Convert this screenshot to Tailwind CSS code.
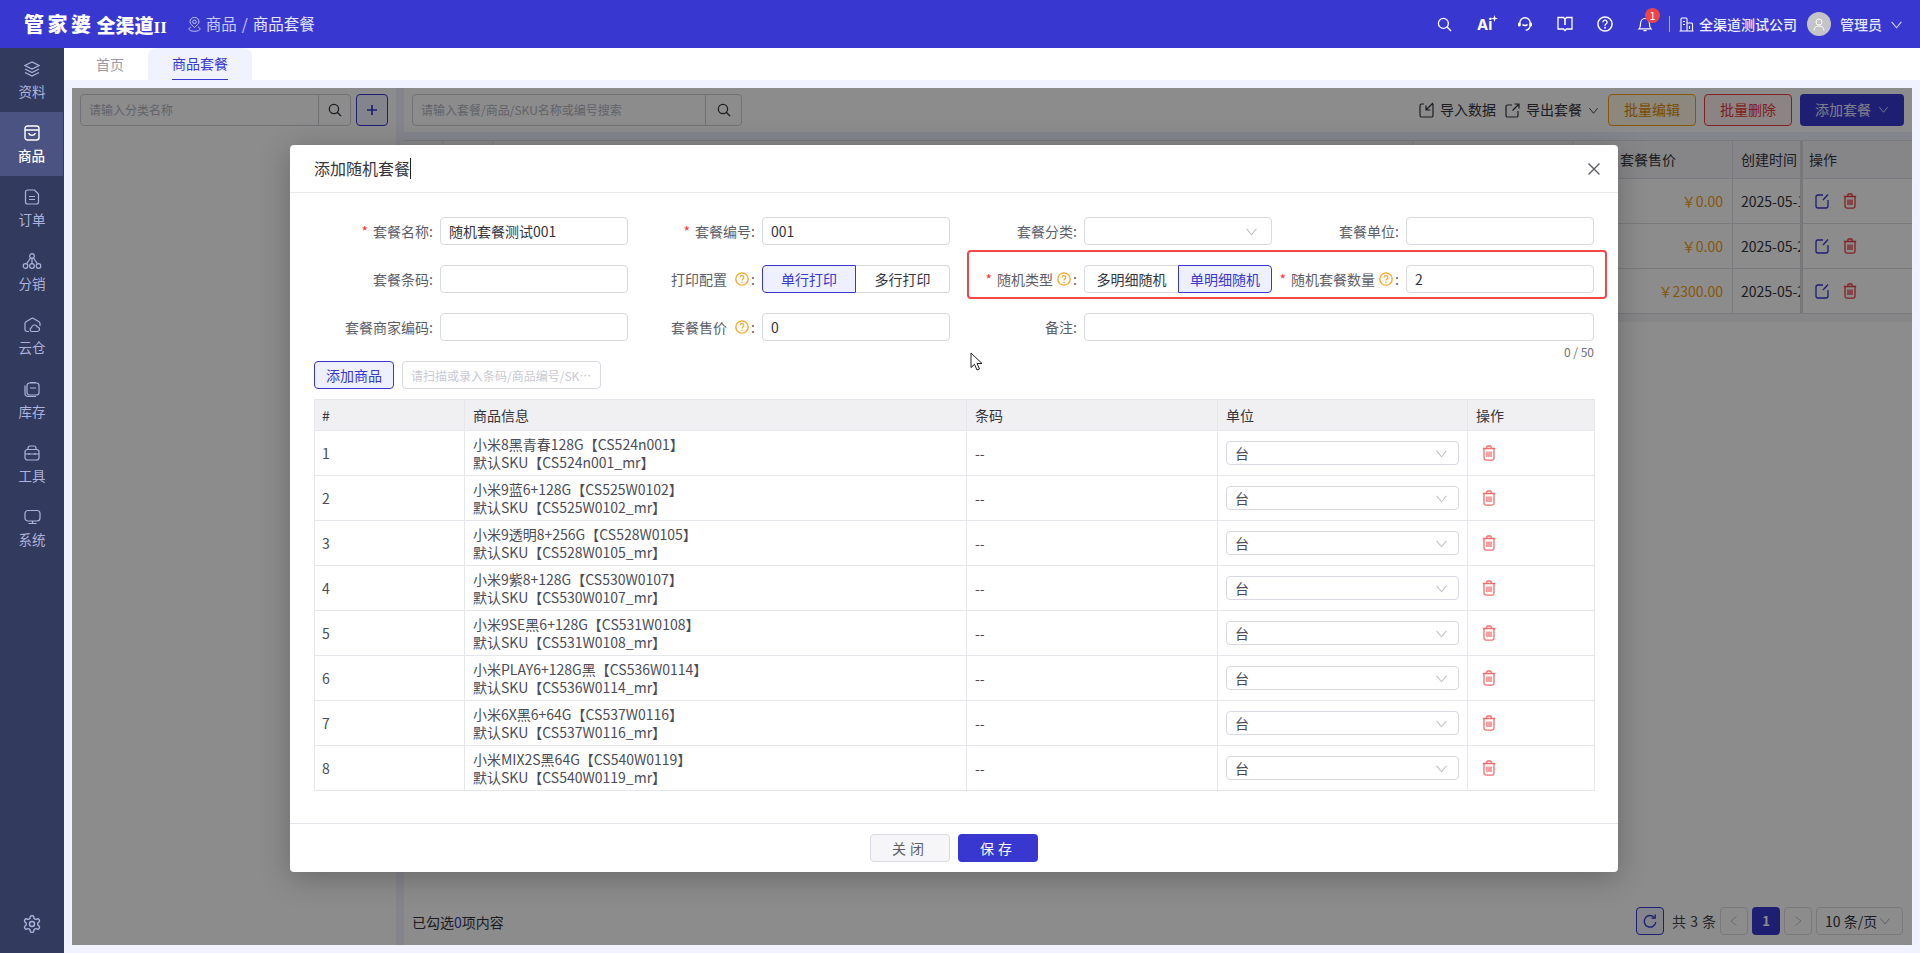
<!DOCTYPE html>
<html lang="zh-CN">
<head>
  <meta charset="UTF-8">
  <meta name="viewport" content="width=device-width, initial-scale=1.0">
  <title>商品套餐</title>
  <script src="https://cdn.jsdelivr.net/npm/@tailwindcss/browser@4"></script>
</head>
<body class="h-screen overflow-hidden bg-[#f0f2ff] text-[14px] text-[#33343d] font-['Noto_Sans_CJK_SC','Noto_Sans',sans-serif]">

  <svg class="hidden">
    <symbol id="chevron" viewBox="0 0 12 12"><path d="M1.500 3.500 6 9l4.500-5.500" fill="none" stroke="currentColor" stroke-width="1"/></symbol>
    <symbol id="trash" viewBox="0 0 14 16"><path d="M.8 3.500h12.400M4.800 3.500V2a1 1 0 0 1 1-1h2.400a1 1 0 0 1 1 1v1.500M2 3.500v9.800a1.800 1.800 0 0 0 1.800 1.800h6.400a1.800 1.800 0 0 0 1.800-1.800V3.500M5 6.500v5.500M7 6.500v5.500M9 6.500v5.500" fill="none" stroke="currentColor" stroke-width="1.300"/></symbol>
    <symbol id="edit" viewBox="0 0 14 16"><path d="M8 2H3a2 2 0 0 0-2 2v9a2 2 0 0 0 2 2h8a2 2 0 0 0 2-2V7M13 1.500 8 7" fill="none" stroke="currentColor" stroke-width="1.300"/></symbol>
    <symbol id="help" viewBox="0 0 14 14"><circle cx="7" cy="7" r="6.200" fill="none" stroke="currentColor" stroke-width="1.300"/><path d="M5.200 5.500a1.800 1.800 0 1 1 2.700 1.500c-.6.400-.9.700-.9 1.500" fill="none" stroke="currentColor" stroke-width="1.200"/><circle cx="7" cy="10.300" r=".8" fill="currentColor"/></symbol>
    <symbol id="search" viewBox="0 0 16 16"><circle cx="6.800" cy="6.800" r="5.300" fill="none" stroke="currentColor" stroke-width="1.400"/><path d="m10.500 10.500 4.500 4.500" fill="none" stroke="currentColor" stroke-width="1.600"/></symbol>
  </svg>

  <!-- top bar -->
  <header class="h-12 bg-[#3838d1] text-white flex items-center">
    <div class="w-[24px]"></div>
    <span class="text-[20px] leading-none font-black tracking-[3.500px]">管家婆</span>
    <span class="ml-[2px] mt-[3px] text-[19px] leading-none font-black">全渠道<span class="font-['Liberation_Serif',serif] font-bold text-[17px]">II</span></span>
    <svg class="ml-[21px] text-[#c3c6f5]" width="13" height="15" viewBox="0 0 13 15" fill="none" stroke="currentColor" stroke-width="1"><path d="M6.500 10.500C4.500 8.500 2 6.800 2 4.800a4.500 4.500 0 0 1 9 0c0 2-2.500 3.700-4.500 5.700z"/><circle cx="6.500" cy="4.800" r="1.800"/><path d="M3 10c-1.300.5-2 1.200-2 2 0 1.300 2.500 2.300 5.500 2.300S12 13.300 12 12c0-.8-.7-1.500-2-2"/></svg>
    <span class="ml-[5px] text-[15.500px] text-[#c9cbf7]">商品</span>
    <span class="mx-[5px] text-[15.500px] text-[#c9cbf7]">/</span>
    <span class="text-[15.500px] text-[#e6e7fc]">商品套餐</span>

    <div class="ml-auto flex items-center">
      <svg width="15" height="15" class="mr-[25px]"><use href="#search"/></svg>
      <span class="relative mr-[24px] w-[16px] text-[15px] font-bold leading-none font-['Inter',sans-serif]">Ai<svg class="absolute -top-[2px] -right-[5px]" width="7" height="7" viewBox="0 0 6 6" fill="white"><path d="M3 0l.7 2.300L6 3l-2.300.7L3 6l-.7-2.300L0 3l2.300-.7z"/></svg></span>
      <svg class="mr-[24px]" width="16" height="16" viewBox="0 0 16 16" fill="none" stroke="currentColor" stroke-width="1.400"><path d="M2.800 9V7a5.200 5.200 0 0 1 10.400 0v2c0 2.600-1.700 4.800-4.500 5.400"/><rect x="1" y="6.500" width="2.600" height="4" rx="1.200" fill="currentColor" stroke="none"/><rect x="12.400" y="6.500" width="2.600" height="4" rx="1.200" fill="currentColor" stroke="none"/><path d="M5.500 8.500c1.200 1.400 3.800 1.400 5 0"/></svg>
      <svg class="mr-[24px]" width="16" height="16" viewBox="0 0 16 16" fill="none" stroke="currentColor" stroke-width="1.300"><path d="M1 1.500h5.500L8 3l1.500-1.500H15V13H9.500L8 14.500 6.500 13H1z"/><path d="M8 3v6" stroke-width="1.600"/></svg>
      <svg class="mr-[24px]" width="16" height="16" viewBox="0 0 16 16"><use href="#help"/></svg>
      <span class="relative mr-[16px] w-[16px] h-[16px] block">
        <svg width="16" height="16" viewBox="0 0 16 16" fill="none" stroke="currentColor" stroke-width="1.200"><path d="M2 12.800h12c-1.100-1.100-1.500-2-1.500-4.800 0-3-1.900-5.500-4.500-5.500S3.500 5 3.500 8c0 2.800-.4 3.700-1.500 4.800zM6.500 14.700h3"/></svg>
        <span class="absolute -top-[8px] left-[8px] w-[15px] h-[15px] rounded-full bg-[#ef4444] text-white text-[11px] leading-[15px] text-center">1</span>
      </span>
      <span class="w-px h-[16px] bg-[#a9abec] mr-[9px]"></span>
      <svg class="mr-[5px]" width="15" height="15" viewBox="0 0 15 15" fill="none" stroke="currentColor" stroke-width="1.100"><path d="M2 14V2a1 1 0 0 1 1-1h4a1 1 0 0 1 1 1v12M8 6h4.500a1 1 0 0 1 1 1v7M.5 14h14M4 4.500h2M4 7.500h2M10.500 9v3"/></svg>
      <span class="text-[14px] text-[#eeeefd] font-medium">全渠道测试公司</span>
      <span class="ml-[10px] w-6 h-6 rounded-full bg-[#c4c4c6] flex items-center justify-center">
        <svg width="12" height="13" viewBox="0 0 12 13" fill="none" stroke="white" stroke-width="1"><circle cx="6" cy="4" r="3"/><path d="M1 12.500c0-3 2-4.500 5-4.500s5 1.500 5 4.500"/></svg>
      </span>
      <span class="ml-[9px] text-[14px] text-[#e6e7fc] font-medium">管理员</span>
      <svg class="ml-[8px] mr-[17px] text-[#d5d6f8]" width="13" height="13"><use href="#chevron"/></svg>
    </div>
  </header>

  <div class="flex h-[905px]">
    <!-- side nav -->
    <nav class="w-16 shrink-0 bg-[#323a5e] text-[#adb3dc] flex flex-col">
      <a class="h-16 flex flex-col items-center pt-[13px]">
        <svg width="16" height="16" viewBox="0 0 16 16" fill="none" stroke="currentColor" stroke-width="1.200"><path d="M8 1 1 4.500 8 8l7-3.500zM1 8l7 3.500L15 8M1 11.500 8 15l7-3.500"/></svg>
        <span class="mt-[4px] leading-[20px] text-[13.500px]">资料</span>
      </a>
      <a class="h-16 w-[63px] bg-[#4a5382] text-white flex flex-col items-center pt-[13px]">
        <svg width="16" height="16" viewBox="0 0 16 16" fill="none" stroke="currentColor" stroke-width="1.400"><rect x="1" y="1" width="14" height="14" rx="2.500"/><path d="M1 5h14M4.800 8c.5 3 5.900 3 6.400 0"/></svg>
        <span class="mt-[4px] leading-[20px] text-[13.500px] font-medium">商品</span>
      </a>
      <a class="h-16 flex flex-col items-center pt-[13px]">
        <svg width="16" height="16" viewBox="0 0 16 16" fill="none" stroke="currentColor" stroke-width="1.200"><path d="M10.500 1H3.500a2 2 0 0 0-2 2v10a2 2 0 0 0 2 2h9a2 2 0 0 0 2-2V5zM5 7.500h6M5 10.500h6"/></svg>
        <span class="mt-[4px] leading-[20px] text-[13.500px]">订单</span>
      </a>
      <a class="h-16 flex flex-col items-center pt-[13px]">
        <svg width="20" height="16" viewBox="0 0 20 16" fill="none" stroke="currentColor" stroke-width="1.200"><circle cx="10" cy="3" r="2.300"/><circle cx="3.500" cy="13" r="2.300"/><circle cx="10" cy="13" r="2.300"/><circle cx="16.500" cy="13" r="2.300"/><path d="M10 5.300v5.400M8.500 5 4.500 10.800M11.500 5l4 5.800"/></svg>
        <span class="mt-[4px] leading-[20px] text-[13.500px]">分销</span>
      </a>
      <a class="h-16 flex flex-col items-center pt-[13px]">
        <svg width="17" height="16" viewBox="0 0 17 16" fill="none" stroke="currentColor" stroke-width="1.200"><path d="M5 14.500H3a2 2 0 0 1-2-2V6.500a2 2 0 0 1 1-1.700L7.500 1.500a2 2 0 0 1 2 0L15 4.800a2 2 0 0 1 1 1.700V9"/><path d="M8 14.500a2 2 0 0 1-.5-3.900 3 3 0 0 1 5.800-.6 2.300 2.300 0 0 1 2.200 2.200 2.300 2.300 0 0 1-2 2.300z"/></svg>
        <span class="mt-[4px] leading-[20px] text-[13.500px]">云仓</span>
      </a>
      <a class="h-16 flex flex-col items-center pt-[13px]">
        <svg width="16" height="16" viewBox="0 0 16 16" fill="none" stroke="currentColor" stroke-width="1.200"><rect x="3" y="2" width="12" height="12" rx="2.500"/><path d="M1 4.500v8a3 3 0 0 0 3 3h8M6 1.500h6M6 7h6"/></svg>
        <span class="mt-[4px] leading-[20px] text-[13.500px]">库存</span>
      </a>
      <a class="h-16 flex flex-col items-center pt-[13px]">
        <svg width="16" height="16" viewBox="0 0 16 16" fill="none" stroke="currentColor" stroke-width="1.200"><rect x="1" y="4.500" width="14" height="10.500" rx="2.500"/><path d="M4 4.500V3a2 2 0 0 1 2-2h4a2 2 0 0 1 2 2v1.500M1 9h14M5 8v2M11 8v2"/></svg>
        <span class="mt-[4px] leading-[20px] text-[13.500px]">工具</span>
      </a>
      <a class="h-16 flex flex-col items-center pt-[13px]">
        <svg width="17" height="16" viewBox="0 0 17 16" fill="none" stroke="currentColor" stroke-width="1.200"><rect x="1" y="1.500" width="15" height="10.500" rx="3"/><path d="M8.500 12v2.500M4.500 14.500h8"/></svg>
        <span class="mt-[4px] leading-[20px] text-[13.500px]">系统</span>
      </a>
      <svg class="mt-auto mb-[19px] mx-auto" width="20" height="20" viewBox="0 0 24 24" fill="none" stroke="currentColor" stroke-width="1.700"><path d="M12.220 2h-.44a2 2 0 0 0-2 2v.18a2 2 0 0 1-1 1.730l-.43.25a2 2 0 0 1-2 0l-.15-.08a2 2 0 0 0-2.730.73l-.22.38a2 2 0 0 0 .73 2.730l.15.1a2 2 0 0 1 1 1.720v.51a2 2 0 0 1-1 1.740l-.15.09a2 2 0 0 0-.73 2.730l.22.38a2 2 0 0 0 2.730.73l.15-.08a2 2 0 0 1 2 0l.43.25a2 2 0 0 1 1 1.730V20a2 2 0 0 0 2 2h.44a2 2 0 0 0 2-2v-.18a2 2 0 0 1 1-1.730l.43-.25a2 2 0 0 1 2 0l.15.08a2 2 0 0 0 2.730-.73l.22-.39a2 2 0 0 0-.73-2.730l-.15-.08a2 2 0 0 1-1-1.740v-.5a2 2 0 0 1 1-1.740l.15-.09a2 2 0 0 0 .73-2.730l-.22-.38a2 2 0 0 0-2.730-.73l-.15.08a2 2 0 0 1-2 0l-.43-.25a2 2 0 0 1-1-1.730V4a2 2 0 0 0-2-2z"/><circle cx="12" cy="12" r="3"/></svg>
    </nav>

    <main class="flex-1 min-w-0 flex flex-col">
      <!-- tabs -->
      <div class="h-8 bg-white flex items-stretch text-[14px]">
        <div class="w-[84px] pl-2 flex items-center justify-center text-[#9a9aa5]">首页</div>
        <div class="w-[104px] rounded-t-lg bg-[#f0f2ff] flex justify-center">
          <span class="w-[56px] text-center leading-[31px] h-8 border-b border-[#3838d1] text-[#3838d1] whitespace-nowrap">商品套餐</span>
        </div>
      </div>

      <!-- page under the dialog -->
      <div class="relative mt-2 ml-2 mr-2 h-[857px] bg-[#f0f2ff] flex">
        <div class="w-[324px] bg-white px-2 pt-[6px] flex gap-[5px] h-full">
          <div class="w-[271px] h-8 border border-[#cfd0d8] rounded flex">
            <div class="flex-1 pl-2 text-[12px] leading-[30px] text-[#b3b4bf]">请输入分类名称</div>
            <div class="w-8 border-l border-[#cfd0d8] flex items-center justify-center text-[#33343d]"><svg width="14" height="14"><use href="#search"/></svg></div>
          </div>
          <div class="w-8 h-8 border border-[#3838d1] rounded bg-[#eef0ff] flex items-center justify-center text-[#3838d1]">
            <svg width="12" height="12" viewBox="0 0 12 12" stroke="currentColor" stroke-width="1.700"><path d="M6 1v10M1 6h10"/></svg>
          </div>
        </div>
        <div class="ml-2 flex-1 min-w-0 flex flex-col">
          <div class="h-11 bg-white flex items-center px-2 shrink-0">
            <div class="w-[330px] h-8 border border-[#cfd0d8] rounded flex">
              <div class="flex-1 pl-2 text-[12px] leading-[30px] text-[#b3b4bf]">请输入套餐/商品/SKU名称或编号搜索</div>
              <div class="w-9 border-l border-[#cfd0d8] flex items-center justify-center"><svg width="14" height="14"><use href="#search"/></svg></div>
            </div>
            <svg class="ml-auto" width="16" height="16" viewBox="0 0 16 16" fill="none" stroke="#33343d" stroke-width="1.200"><path d="M5 2H2.500a1.500 1.500 0 0 0-1.500 1.500v10A1.500 1.500 0 0 0 2.500 15h10a1.500 1.500 0 0 0 1.500-1.500V2M14 1 7 8M7 3.500V8h4.500"/></svg>
            <span class="ml-[5px] -mt-px text-[14px]">导入数据</span>
            <svg class="ml-[9px]" width="15" height="15" viewBox="0 0 15 15" fill="none" stroke="#33343d" stroke-width="1.200"><path d="M7 2H2.500A1.500 1.500 0 0 0 1 3.500v9A1.500 1.500 0 0 0 2.500 14h9a1.500 1.500 0 0 0 1.500-1.500V8M14 1 7.500 7.500M9.500 1H14v4.500"/></svg>
            <span class="ml-[6px] -mt-px text-[14px]">导出套餐</span>
            <svg class="ml-[6px] text-[#33343d]" width="11" height="11"><use href="#chevron"/></svg>
            <button class="ml-[9px] w-[88px] h-8 rounded border border-[#f59e0b] bg-[#fff7e6] text-[#e08a00] pb-px">批量编辑</button>
            <button class="ml-2 w-[88px] h-8 rounded border border-[#ef3c3c] bg-[#fff0f0] text-[#e53535] pb-px">批量删除</button>
            <button class="ml-2 w-[104px] h-8 rounded bg-[#3838d1] text-[#e6e7fc] flex items-center justify-center gap-[7px] pb-px">添加套餐<svg width="11" height="11"><use href="#chevron"/></svg></button>
          </div>

          <div class="mt-2 bg-white flex-1 flex flex-col">
            <div class="flex h-[39px] bg-[#f5f5f7] border-y border-[#dedfe5] text-[14px] leading-[36px]">
              <div class="w-[39px] border-r border-[#dedfe5]"></div>
              <div class="w-[50px] border-r border-[#dedfe5]"></div>
              <div class="w-[920px] border-r border-[#dedfe5]"></div>
              <div class="w-[160px] border-r border-[#dedfe5]"></div>
              <div class="w-[160px] border-r border-[#dedfe5] pl-[47px]">套餐售价</div>
              <div class="w-[67px] pl-2 whitespace-nowrap overflow-hidden">创建时间</div>
              <div class="w-[111px] pl-[6px] border-l-[3px] border-[#d9d9dc]">操作</div>
            </div>
            <div class="flex h-[45px] border-b border-[#dedfe5] leading-[45px]">
              <div class="w-[1169px] border-r border-[#dedfe5]"></div>
              <div class="w-[160px] border-r border-[#dedfe5] text-right pr-[9px] text-[#f59e0b]">￥0.00</div>
              <div class="w-[67px] pl-2 whitespace-nowrap overflow-hidden">2025-05-1</div>
              <div class="w-[111px] flex items-center gap-[14px] pl-[12px] border-l-[3px] border-[#d9d9dc]"><svg class="text-[#3838d1]" width="14" height="16"><use href="#edit"/></svg><svg class="text-[#ef3c3c]" width="14" height="16"><use href="#trash"/></svg></div>
            </div>
            <div class="flex h-[45px] border-b border-[#dedfe5] leading-[45px]">
              <div class="w-[1169px] border-r border-[#dedfe5]"></div>
              <div class="w-[160px] border-r border-[#dedfe5] text-right pr-[9px] text-[#f59e0b]">￥0.00</div>
              <div class="w-[67px] pl-2 whitespace-nowrap overflow-hidden">2025-05-2</div>
              <div class="w-[111px] flex items-center gap-[14px] pl-[12px] border-l-[3px] border-[#d9d9dc]"><svg class="text-[#3838d1]" width="14" height="16"><use href="#edit"/></svg><svg class="text-[#ef3c3c]" width="14" height="16"><use href="#trash"/></svg></div>
            </div>
            <div class="flex h-[45px] border-b border-[#dedfe5] leading-[45px]">
              <div class="w-[1169px] border-r border-[#dedfe5]"></div>
              <div class="w-[160px] border-r border-[#dedfe5] text-right pr-[9px] text-[#f59e0b]">￥2300.00</div>
              <div class="w-[67px] pl-2 whitespace-nowrap overflow-hidden">2025-05-2</div>
              <div class="w-[111px] flex items-center gap-[14px] pl-[12px] border-l-[3px] border-[#d9d9dc]"><svg class="text-[#3838d1]" width="14" height="16"><use href="#edit"/></svg><svg class="text-[#ef3c3c]" width="14" height="16"><use href="#trash"/></svg></div>
            </div>
            <div class="h-2 bg-[#f5f5f7]"></div>

            <div class="mt-auto h-[44px] flex items-center pl-2 pr-[9px] pb-[4px]">
              <span class="mt-[2px]">已勾选<span class="text-[#3838d1]">0</span>项内容</span>
              <div class="ml-auto flex items-center">
                <div class="w-7 h-7 rounded border border-[#3838d1] bg-[#eef0ff] text-[#3838d1] flex items-center justify-center">
                  <svg width="16" height="16" viewBox="0 0 16 16" fill="none" stroke="currentColor" stroke-width="1.300"><path d="M12.800 5A5.800 5.800 0 1 0 13.800 9"/><path d="M13.200 1.500V5.200H9.500"/></svg>
                </div>
                <span class="ml-2 w-[43px] text-[#45464f] whitespace-pre tracking-[.5px]">共 3 条</span>
                <div class="ml-[5px] w-7 h-7 rounded border border-[#dedfe5] flex items-center justify-center text-[#c0c1c9]"><svg width="12" height="12" class="rotate-90"><use href="#chevron"/></svg></div>
                <div class="ml-1 w-7 h-7 rounded bg-[#3838d1] text-white text-center leading-7 font-bold text-[13px]">1</div>
                <div class="ml-1 w-7 h-7 rounded border border-[#dedfe5] flex items-center justify-center text-[#c0c1c9]"><svg width="12" height="12" class="-rotate-90"><use href="#chevron"/></svg></div>
                <div class="ml-1 w-[87px] h-7 rounded border border-[#dedfe5] flex items-center pl-2 gap-[2px] text-[#33343d] whitespace-nowrap">10 条/页<svg width="12" height="12" class="text-[#b0b1ba]"><use href="#chevron"/></svg></div>
              </div>
            </div>
          </div>
        </div>

        <!-- mask -->
        <div class="absolute inset-0 bg-black/45"></div>
      </div>
    </main>
  </div>

  <!-- dialog -->
  <div class="absolute left-[290px] top-[145px] w-[1328px] h-[727px] bg-white rounded shadow-[0_6px_30px_rgba(0,0,0,0.25)] flex flex-col">
    <div class="h-[48px] shrink-0 border-b border-[#e9eaee] flex items-center pl-[24px] pr-[18px] text-[16px] text-[#33343d]">
      <span class="-mt-px">添加随机套餐</span><span class="w-px h-[21px] bg-[#222]"></span>
      <svg class="ml-auto" width="12" height="12" viewBox="0 0 12 12" stroke="#55565f" stroke-width="1.300"><path d="M.5.500l11 11M11.500.500l-11 11"/></svg>
    </div>

    <div class="flex-1 pt-[24px] pl-[16px] pr-[24px]">
      <div class="grid grid-cols-[repeat(4,322px)] gap-y-[20px] text-[#5d5e68]">
        <div class="flex h-7 items-center">
          <label class="w-[134px] pr-[7px] text-right"><span class="text-[#f33] mr-[5px]">*</span>套餐名称:</label>
          <input class="w-[188px] h-7 border border-[#d9dae1] rounded px-2 text-[#33343d] outline-none" value="随机套餐测试001">
        </div>
        <div class="flex h-7 items-center">
          <label class="w-[134px] pr-[7px] text-right"><span class="text-[#f33] mr-[5px]">*</span>套餐编号:</label>
          <input class="w-[188px] h-7 border border-[#d9dae1] rounded px-2 text-[#33343d] outline-none" value="001">
        </div>
        <div class="flex h-7 items-center">
          <label class="w-[134px] pr-[7px] text-right">套餐分类:</label>
          <div class="w-[188px] h-7 border border-[#d9dae1] rounded flex items-center justify-end pr-[13px] text-[#c0c1c9]"><svg width="13" height="13"><use href="#chevron"/></svg></div>
        </div>
        <div class="flex h-7 items-center">
          <label class="w-[134px] pr-[7px] text-right">套餐单位:</label>
          <input class="w-[188px] h-7 border border-[#d9dae1] rounded px-2 text-[#33343d] outline-none">
        </div>

        <div class="flex h-7 items-center">
          <label class="w-[134px] pr-[7px] text-right">套餐条码:</label>
          <input class="w-[188px] h-7 border border-[#d9dae1] rounded px-2 outline-none">
        </div>
        <div class="flex h-7 items-center">
          <label class="w-[134px] pr-[7px] flex items-center justify-end">打印配置<svg class="ml-2 mr-[2px] text-[#f5a623]" width="14" height="14"><use href="#help"/></svg>:</label>
          <div class="w-[188px] h-7 flex text-center leading-[26px]">
            <div class="w-[94px] border border-[#3838d1] bg-[#eef0ff] text-[#3838d1] rounded-l">单行打印</div>
            <div class="w-[94px] border border-l-0 border-[#d9dae1] text-[#33343d] rounded-r">多行打印</div>
          </div>
        </div>
        <div class="flex h-7 items-center">
          <label class="w-[134px] pr-[7px] flex items-center justify-end"><span class="text-[#f33] mr-[5px]">*</span>随机类型<svg class="ml-1 mr-[2px] text-[#f5a623]" width="14" height="14"><use href="#help"/></svg>:</label>
          <div class="w-[188px] h-7 flex text-center leading-[26px]">
            <div class="w-[94px] border border-r-0 border-[#d9dae1] text-[#33343d] rounded-l">多明细随机</div>
            <div class="w-[94px] border border-[#3838d1] bg-[#eef0ff] text-[#3838d1] rounded-r">单明细随机</div>
          </div>
        </div>
        <div class="flex h-7 items-center">
          <label class="w-[134px] pr-[7px] flex items-center justify-end whitespace-nowrap"><span class="text-[#f33] mr-[5px]">*</span>随机套餐数量<svg class="ml-1 mr-[2px] text-[#f5a623]" width="14" height="14"><use href="#help"/></svg>:</label>
          <input class="w-[188px] h-7 border border-[#d9dae1] rounded px-2 text-[#33343d] outline-none" value="2">
        </div>

        <div class="flex h-7 items-center">
          <label class="w-[134px] pr-[7px] text-right">套餐商家编码:</label>
          <input class="w-[188px] h-7 border border-[#d9dae1] rounded px-2 outline-none">
        </div>
        <div class="flex h-7 items-center">
          <label class="w-[134px] pr-[7px] flex items-center justify-end">套餐售价<svg class="ml-2 mr-[2px] text-[#f5a623]" width="14" height="14"><use href="#help"/></svg>:</label>
          <input class="w-[188px] h-7 border border-[#d9dae1] rounded px-2 text-[#33343d] outline-none" value="0">
        </div>
        <div class="col-span-2 flex h-7 items-center">
          <label class="w-[134px] pr-[7px] text-right">备注:</label>
          <input class="w-[510px] h-7 border border-[#d9dae1] rounded px-2 outline-none">
        </div>
      </div>
      <div class="text-right text-[12px] leading-[16px] mt-[3px] text-[#6f707a]">0 / 50</div>

      <div class="ml-[8px] mt-[1px] flex gap-2">
        <button class="w-[80px] h-7 rounded border border-[#3838d1] bg-[#eef0ff] text-[#3838d1]">添加商品</button>
        <input class="w-[199px] h-7 border border-[#d9dae1] rounded px-2 text-[12px] outline-none text-ellipsis placeholder:text-[#c8c9d2]" placeholder="请扫描或录入条码/商品编号/SKU编码">
      </div>

      <table class="ml-[8px] mt-[10px] w-[1280px] table-fixed border-collapse text-[#4b4c57]">
        <colgroup><col class="w-[150px]"><col class="w-[502px]"><col class="w-[251px]"><col class="w-[250px]"><col class="w-[127px]"></colgroup>
        <thead>
          <tr class="h-[31px] bg-[#f0f0f3] text-[#33343d] text-left">
            <th class="border border-[#e6e7ec] pl-[7px] font-normal">#</th>
            <th class="border border-[#e6e7ec] pl-[8px] font-normal">商品信息</th>
            <th class="border border-[#e6e7ec] pl-[8px] font-normal">条码</th>
            <th class="border border-[#e6e7ec] pl-[8px] font-normal">单位</th>
            <th class="border border-[#e6e7ec] pl-[8px] font-normal">操作</th>
          </tr>
        </thead>
        <tbody class="leading-[18px]">
          <tr class="h-[45px]">
            <td class="border border-[#e6e7ec] pl-[7px]">1</td>
            <td class="border border-[#e6e7ec] pl-[8px]">小米8黑青春128G【CS524n001】<br>默认SKU【CS524n001_mr】</td>
            <td class="border border-[#e6e7ec] pl-[8px]">--</td>
            <td class="border border-[#e6e7ec] px-[8px]"><div class="h-6 border border-[#d9dae1] rounded flex items-center justify-between pl-2 pr-[10px]">台<svg class="text-[#c0c1c9]" width="13" height="13"><use href="#chevron"/></svg></div></td>
            <td class="border border-[#e6e7ec] pl-[14px]"><svg class="text-[#f56c6c]" width="14" height="16"><use href="#trash"/></svg></td>
          </tr>
          <tr class="h-[45px]">
            <td class="border border-[#e6e7ec] pl-[7px]">2</td>
            <td class="border border-[#e6e7ec] pl-[8px]">小米9蓝6+128G【CS525W0102】<br>默认SKU【CS525W0102_mr】</td>
            <td class="border border-[#e6e7ec] pl-[8px]">--</td>
            <td class="border border-[#e6e7ec] px-[8px]"><div class="h-6 border border-[#d9dae1] rounded flex items-center justify-between pl-2 pr-[10px]">台<svg class="text-[#c0c1c9]" width="13" height="13"><use href="#chevron"/></svg></div></td>
            <td class="border border-[#e6e7ec] pl-[14px]"><svg class="text-[#f56c6c]" width="14" height="16"><use href="#trash"/></svg></td>
          </tr>
          <tr class="h-[45px]">
            <td class="border border-[#e6e7ec] pl-[7px]">3</td>
            <td class="border border-[#e6e7ec] pl-[8px]">小米9透明8+256G【CS528W0105】<br>默认SKU【CS528W0105_mr】</td>
            <td class="border border-[#e6e7ec] pl-[8px]">--</td>
            <td class="border border-[#e6e7ec] px-[8px]"><div class="h-6 border border-[#d9dae1] rounded flex items-center justify-between pl-2 pr-[10px]">台<svg class="text-[#c0c1c9]" width="13" height="13"><use href="#chevron"/></svg></div></td>
            <td class="border border-[#e6e7ec] pl-[14px]"><svg class="text-[#f56c6c]" width="14" height="16"><use href="#trash"/></svg></td>
          </tr>
          <tr class="h-[45px]">
            <td class="border border-[#e6e7ec] pl-[7px]">4</td>
            <td class="border border-[#e6e7ec] pl-[8px]">小米9紫8+128G【CS530W0107】<br>默认SKU【CS530W0107_mr】</td>
            <td class="border border-[#e6e7ec] pl-[8px]">--</td>
            <td class="border border-[#e6e7ec] px-[8px]"><div class="h-6 border border-[#d9dae1] rounded flex items-center justify-between pl-2 pr-[10px]">台<svg class="text-[#c0c1c9]" width="13" height="13"><use href="#chevron"/></svg></div></td>
            <td class="border border-[#e6e7ec] pl-[14px]"><svg class="text-[#f56c6c]" width="14" height="16"><use href="#trash"/></svg></td>
          </tr>
          <tr class="h-[45px]">
            <td class="border border-[#e6e7ec] pl-[7px]">5</td>
            <td class="border border-[#e6e7ec] pl-[8px]">小米9SE黑6+128G【CS531W0108】<br>默认SKU【CS531W0108_mr】</td>
            <td class="border border-[#e6e7ec] pl-[8px]">--</td>
            <td class="border border-[#e6e7ec] px-[8px]"><div class="h-6 border border-[#d9dae1] rounded flex items-center justify-between pl-2 pr-[10px]">台<svg class="text-[#c0c1c9]" width="13" height="13"><use href="#chevron"/></svg></div></td>
            <td class="border border-[#e6e7ec] pl-[14px]"><svg class="text-[#f56c6c]" width="14" height="16"><use href="#trash"/></svg></td>
          </tr>
          <tr class="h-[45px]">
            <td class="border border-[#e6e7ec] pl-[7px]">6</td>
            <td class="border border-[#e6e7ec] pl-[8px]">小米PLAY6+128G黑【CS536W0114】<br>默认SKU【CS536W0114_mr】</td>
            <td class="border border-[#e6e7ec] pl-[8px]">--</td>
            <td class="border border-[#e6e7ec] px-[8px]"><div class="h-6 border border-[#d9dae1] rounded flex items-center justify-between pl-2 pr-[10px]">台<svg class="text-[#c0c1c9]" width="13" height="13"><use href="#chevron"/></svg></div></td>
            <td class="border border-[#e6e7ec] pl-[14px]"><svg class="text-[#f56c6c]" width="14" height="16"><use href="#trash"/></svg></td>
          </tr>
          <tr class="h-[45px]">
            <td class="border border-[#e6e7ec] pl-[7px]">7</td>
            <td class="border border-[#e6e7ec] pl-[8px]">小米6X黑6+64G【CS537W0116】<br>默认SKU【CS537W0116_mr】</td>
            <td class="border border-[#e6e7ec] pl-[8px]">--</td>
            <td class="border border-[#e6e7ec] px-[8px]"><div class="h-6 border border-[#d9dae1] rounded flex items-center justify-between pl-2 pr-[10px]">台<svg class="text-[#c0c1c9]" width="13" height="13"><use href="#chevron"/></svg></div></td>
            <td class="border border-[#e6e7ec] pl-[14px]"><svg class="text-[#f56c6c]" width="14" height="16"><use href="#trash"/></svg></td>
          </tr>
          <tr class="h-[45px]">
            <td class="border border-[#e6e7ec] pl-[7px]">8</td>
            <td class="border border-[#e6e7ec] pl-[8px]">小米MIX2S黑64G【CS540W0119】<br>默认SKU【CS540W0119_mr】</td>
            <td class="border border-[#e6e7ec] pl-[8px]">--</td>
            <td class="border border-[#e6e7ec] px-[8px]"><div class="h-6 border border-[#d9dae1] rounded flex items-center justify-between pl-2 pr-[10px]">台<svg class="text-[#c0c1c9]" width="13" height="13"><use href="#chevron"/></svg></div></td>
            <td class="border border-[#e6e7ec] pl-[14px]"><svg class="text-[#f56c6c]" width="14" height="16"><use href="#trash"/></svg></td>
          </tr>
        </tbody>
      </table>
    </div>

    <div class="h-[49px] shrink-0 border-t border-[#e6e7ec] flex items-center justify-center gap-2">
      <button class="w-[80px] h-7 rounded border border-[#d9dae1] bg-[#f6f6f9] text-[#5d5e68] tracking-[4px]">关闭</button>
      <button class="w-[80px] h-7 rounded bg-[#3838d1] text-white tracking-[4px]">保存</button>
    </div>

    <!-- red annotation box and mouse pointer from the screenshot -->
    <div class="absolute left-[677px] top-[105px] w-[640px] h-[49px] border-2 border-[#f44848] rounded"></div>
    <svg class="absolute left-[680px] top-[207px]" width="13" height="19" viewBox="0 0 13 19"><path d="M1 1v14.500l3.500-3.200L7 18l2.500-1-2.500-5.500h5z" fill="white" stroke="#222" stroke-width="1"/></svg>
  </div>
</body>
</html>
